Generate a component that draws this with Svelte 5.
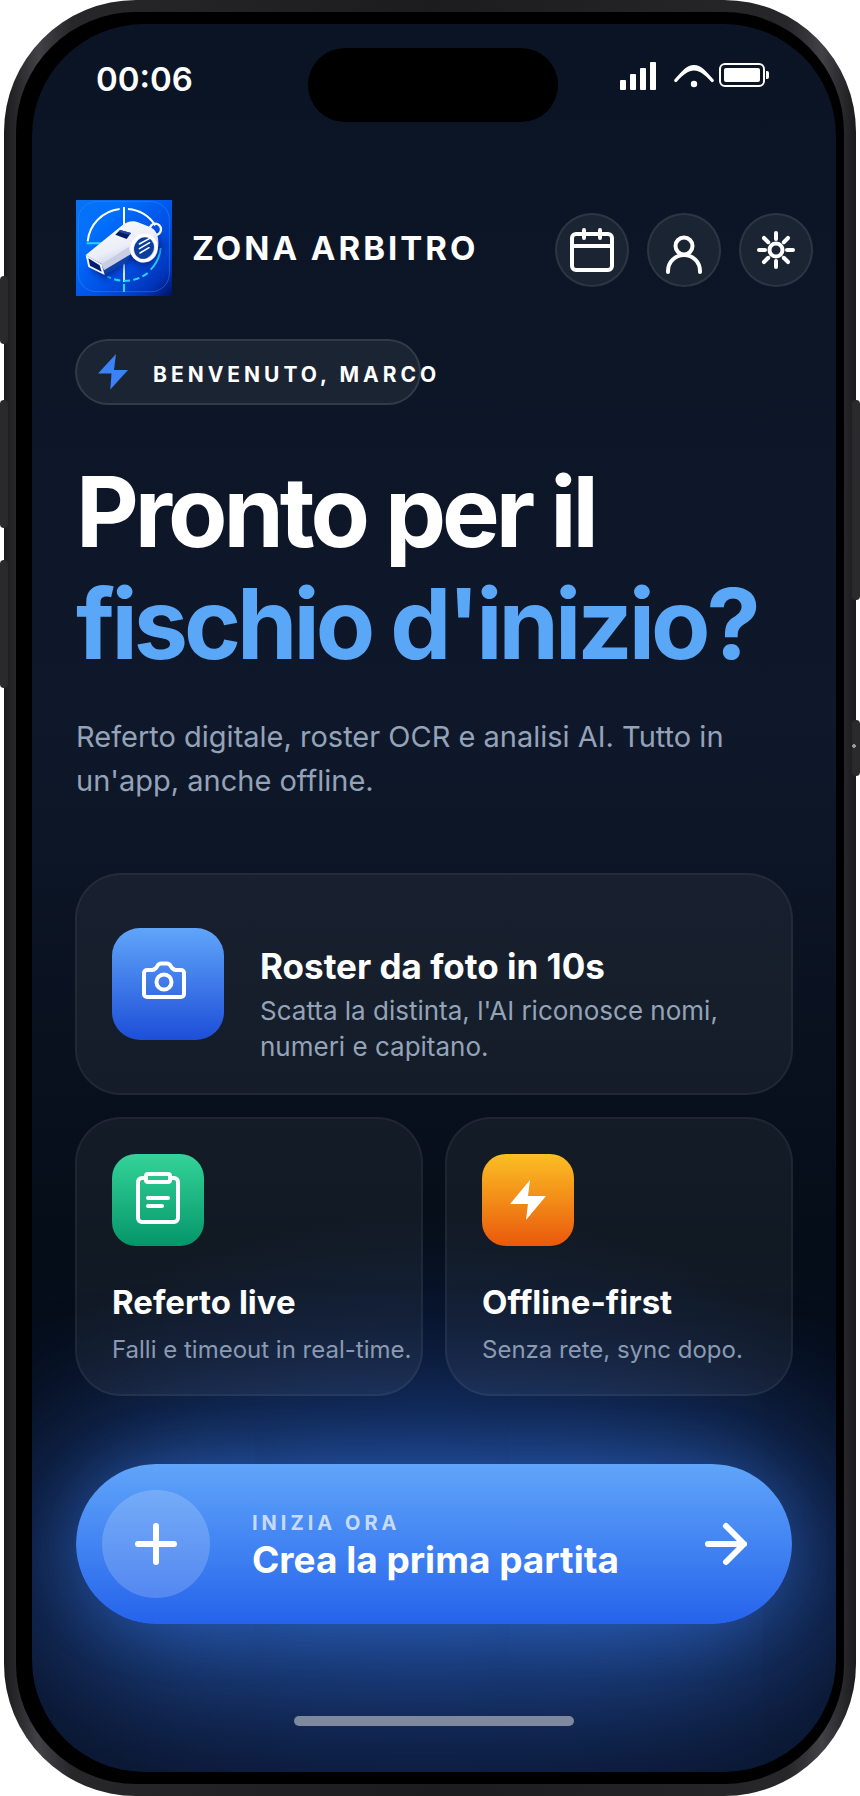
<script lang="ts">
  let userName = 'Marco';
  let time = '00:06';

  const bars = [
    { x: 0, h: 10 },
    { x: 10, h: 16 },
    { x: 20, h: 22 },
    { x: 30, h: 28 },
  ];

  const rays = [0, 45, 90, 135, 180, 225, 270, 315];
</script>

<div class="device">
  <span class="key key-action"></span>
  <span class="key key-up"></span>
  <span class="key key-down"></span>
  <span class="key key-power"></span>
  <span class="key key-camera"></span>

  <div class="frame">
    <div class="bezel">
      <main class="screen">
        <div class="status">
          <span class="clock">{time}</span>
          <span class="island"></span>
          <svg class="indicators" width="150" height="30" viewBox="0 0 150 30" fill="#fff" aria-hidden="true">
            {#each bars as bar}
              <rect x={bar.x} y={30 - bar.h} width="6" height={bar.h} rx="1" />
            {/each}
            <path d="M54.5 19.5C62 11 67 5 74 5s12 6 19.500 14.500a1.500 1.500 0 0 1-2.500 2C84 14 79.500 10.500 74 10.500S64 14 57 21.500a1.500 1.500 0 0 1-2.500-2Z" />
            <circle cx="74" cy="24" r="3.200" />
            <rect x="100" y="4" width="44" height="22" rx="5" fill="none" stroke="#fff" stroke-width="2" />
            <rect x="104" y="8" width="36" height="14" rx="2" />
            <path d="M146 11h1a2 2 0 0 1 2 2v4a2 2 0 0 1-2 2h-1Z" />
          </svg>
        </div>

        <header class="header">
          <svg class="logo" width="96" height="96" viewBox="0 0 288 288" role="img" aria-label="Zona Arbitro">
            <defs>
              <linearGradient id="logo-bg" x1="0" y1="0" x2="1" y2="1">
                <stop offset="0" stop-color="#0872f2" />
                <stop offset="0.250" stop-color="#0070ff" />
                <stop offset="0.600" stop-color="#0050e4" />
                <stop offset="0.850" stop-color="#0034b8" />
                <stop offset="1" stop-color="#02105e" />
              </linearGradient>
              <linearGradient id="logo-body" x1="0" y1="0" x2="0.600" y2="1">
                <stop offset="0" stop-color="#ffffff" />
                <stop offset="0.600" stop-color="#eceef8" />
                <stop offset="1" stop-color="#b4bbdc" />
              </linearGradient>
              <filter id="logo-shadow" x="-20%" y="-20%" width="150%" height="150%">
                <feGaussianBlur stdDeviation="9" />
              </filter>
            </defs>
            <rect width="288" height="288" fill="url(#logo-bg)" />
            <rect x="7" y="5" width="273" height="270" rx="54" fill="none" stroke="#3d8cff" stroke-opacity="0.450" stroke-width="3" />
            <g fill="none" stroke="#fff" stroke-width="6">
              <path d="M35 124A109 109 0 0 1 131 27" />
              <path d="M156 27A109 109 0 0 1 238 76" />
              <path d="M144 21v60" />
              <path d="M144 170v76" stroke="#dbe6ff" />
            </g>
            <g fill="none" stroke="#22d8ff" stroke-width="6">
              <path d="M32 130h52" />
              <path d="M254 144A110 110 0 0 1 224 209" />
              <path d="M215 219A110 110 0 0 1 94 229" stroke-dasharray="19 10" />
              <path d="M144 252v24" />
            </g>
            <path d="M40 205L90 240L160 185L215 200L262 140L230 90Z" fill="#001a80" opacity="0.700" filter="url(#logo-shadow)" />
            <ellipse cx="238" cy="88" rx="17" ry="17" fill="none" stroke="#f2f4fc" stroke-width="7" />
            <path d="M77 192L85 224L152 188L166 156Z" fill="#0c3fa8" />
            <path d="M29 165L136 78C150 66 168 61 184 66L224 82C244 92 250 116 246 144A43 45 0 0 1 164 162L160 158L84 208L77 192Z" fill="url(#logo-body)" />
            <path d="M77 193L158 141C160 154 161 160 164 163L84 211Z" fill="#c8cde4" />
            <path d="M29 165L77 193L86 225L37 201Z" fill="#f6f7fd" />
            <path d="M37 175L71 196L77 215L42 197Z" fill="#03206f" />
            <path d="M132 90L165 99L152 117L118 104Z" fill="#061c5c" />
            <path d="M132 90L165 99L161 105L129 96Z" fill="#1a48a4" />
            <ellipse cx="204" cy="144" rx="36" ry="39" fill="none" stroke="#fff" stroke-width="9" transform="rotate(25 204 144)" />
            <ellipse cx="204" cy="144" rx="29" ry="33" fill="#0b3d9c" transform="rotate(25 204 144)" />
            <path d="M190 132L221 115M190 146L221 128M192 159L219 143" stroke="#fff" stroke-width="4.500" stroke-linecap="round" />
          </svg>
          <span class="brand">ZONA ARBITRO</span>
          <nav class="actions">
            <button class="round-btn" aria-label="Calendario">
              <svg width="52" height="52" viewBox="0 0 52 52" class="line">
                <rect x="6" y="10" width="40" height="36" rx="4" />
                <path d="M6 22h40M18 6v8M34 6v8" />
              </svg>
            </button>
            <button class="round-btn" aria-label="Profilo">
              <svg width="52" height="52" viewBox="0 0 52 52" class="line">
                <circle cx="26" cy="22" r="8.500" />
                <path d="M10 48v-1a16 16 0 0 1 32 0v1" />
              </svg>
            </button>
            <button class="round-btn" aria-label="Impostazioni">
              <svg width="52" height="52" viewBox="0 0 52 52" class="line">
                <circle cx="26" cy="26" r="6.500" />
                {#each rays as angle}
                  <path d="M26 9v6" transform="rotate({angle} 26 26)" />
                {/each}
              </svg>
            </button>
          </nav>
        </header>

        <div class="badge">
          <svg width="32" height="36" viewBox="0 0 32 36" fill="#3b82f6" aria-hidden="true">
            <path d="M19 0L1 19.500H14.500L13.300 35.500L31 16H17Z" />
          </svg>
          <span>BENVENUTO, {userName.toUpperCase()}</span>
        </div>

        <h1>Pronto per il<br /><em>fischio d'inizio?</em></h1>
        <p class="lead">Referto digitale, roster OCR e analisi AI. Tutto in un'app, anche offline.</p>

        <section class="features">
          <article class="card card-wide">
            <span class="icon icon-blue">
              <svg width="104" height="104" viewBox="0 0 104 104" class="line" aria-hidden="true">
                <path d="M31 38h5c2 0 3-1 4-2l2-3c1-1 2-1.500 3-1.500h6c1 0 2 .5 3 1.500l2 3c1 1 2 2 4 2h5a3 3 0 0 1 3 3v21a3 3 0 0 1-3 3H31a3 3 0 0 1-3-3V41a3 3 0 0 1 3-3Z" />
                <circle cx="48" cy="50" r="7.500" />
              </svg>
            </span>
            <div class="card-text">
              <h2>Roster da foto in 10s</h2>
              <p>Scatta la distinta, l'AI riconosce nomi, numeri e capitano.</p>
            </div>
          </article>

          <article class="card">
            <span class="icon icon-green">
              <svg width="92" height="92" viewBox="0 0 92 92" class="line" aria-hidden="true">
                <path d="M34 24h-4a4 4 0 0 0-4 4v36a4 4 0 0 0 4 4h32a4 4 0 0 0 4-4V28a4 4 0 0 0-4-4h-4" />
                <rect x="34" y="20" width="24" height="8" rx="2" />
                <path d="M36 44h20M36 52h14" />
              </svg>
            </span>
            <h3>Referto live</h3>
            <p>Falli e timeout in real-time.</p>
          </article>

          <article class="card">
            <span class="icon icon-orange">
              <svg width="92" height="92" viewBox="0 0 92 92" fill="#fff" aria-hidden="true">
                <path d="M48 26L28 50H46L44 66L64 42H46Z" />
              </svg>
            </span>
            <h3>Offline-first</h3>
            <p>Senza rete, sync dopo.</p>
          </article>
        </section>

        <button class="cta">
          <span class="plus">
            <svg width="44" height="44" viewBox="0 0 44 44" class="line cta-line" aria-hidden="true">
              <path d="M22 4v36M4 22h36" />
            </svg>
          </span>
          <span class="cta-text">
            <small>INIZIA ORA</small>
            <strong>Crea la prima partita</strong>
          </span>
          <svg width="44" height="44" viewBox="0 0 44 44" class="line cta-line" aria-hidden="true">
            <path d="M4 22h36M22 4l18 18-18 18" />
          </svg>
        </button>

        <div class="home"></div>
      </main>
    </div>
  </div>
</div>

<style>
  :global(body) {
    margin: 0;
    background: #fff;
  }

  .device {
    position: relative;
    padding: 0 4px;
    font-family: Inter, 'Liberation Sans', sans-serif;
    color: #fff;
  }

  .frame {
    padding: 12px;
    border-radius: 132px;
    background: linear-gradient(90deg, #1a1a1c 0, #414146 4%, #27272a 8%, #1c1c1e 50%, #27272a 92%, #414146 96%, #1a1a1c 100%);
  }

  .bezel {
    padding: 12px 8px 12px 16px;
    border-radius: 120px;
    background: #000;
  }

  .screen {
    display: flex;
    flex-direction: column;
    box-sizing: border-box;
    padding: 24px 44px 46px;
    border-radius: 112px;
    overflow: hidden;
    background:
      radial-gradient(ellipse 60% 18% at 50% 86%, rgba(37, 99, 235, 0.25), rgba(37, 99, 235, 0)),
      linear-gradient(180deg, #0a1424 0%, #0f182a 40%, #050d18 70%, #081024 85%, #0a1630 100%);
  }

  /* hardware keys sit over the frame edge */
  .key {
    position: absolute;
    z-index: 1;
    width: 8px;
    border-radius: 4px;
    background: #2a2a2c;
  }

  .key-action {
    left: 0;
    top: 276px;
    height: 68px;
  }

  .key-up {
    left: 0;
    top: 400px;
    height: 128px;
  }

  .key-down {
    left: 0;
    top: 560px;
    height: 128px;
  }

  .key-power {
    right: 0;
    top: 400px;
    height: 200px;
  }

  .key-camera {
    right: 0;
    top: 720px;
    height: 56px;
    background: radial-gradient(circle at 2px 26px, #98989c 2px, #2a2a2c 2px);
  }

  .status {
    display: grid;
    grid-template-columns: 1fr 250px 1fr;
    align-items: start;
    margin: 0 22px 0 20px;
  }

  .clock {
    padding-top: 11px;
    font-size: 33px;
    font-weight: 600;
    line-height: 40px;
  }

  .island {
    height: 74px;
    border-radius: 37px;
    background: #000;
  }

  .indicators {
    justify-self: end;
    margin-top: 12px;
  }

  .header {
    display: flex;
    align-items: center;
    margin: 78px -21px 0 0;
  }

  .logo {
    flex: none;
  }

  .brand {
    margin-left: 20px;
    font-size: 33px;
    font-weight: 700;
    line-height: 44px;
    letter-spacing: 3px;
    white-space: nowrap;
  }

  .actions {
    display: flex;
    gap: 18px;
    margin-left: auto;
    padding-top: 4px;
  }

  button {
    margin: 0;
    padding: 0;
    border: none;
    font-family: inherit;
    color: inherit;
    cursor: pointer;
  }

  .round-btn {
    display: flex;
    align-items: center;
    justify-content: center;
    width: 74px;
    height: 74px;
    border: 2px solid rgba(255, 255, 255, 0.08);
    border-radius: 50%;
    background: #1b2432;
  }

  .line {
    fill: none;
    stroke: #fff;
    stroke-width: 4;
    stroke-linecap: round;
    stroke-linejoin: round;
  }

  .line.cta-line {
    stroke-width: 6;
  }

  .badge {
    display: flex;
    align-items: center;
    gap: 24px;
    box-sizing: border-box;
    width: 346px;
    height: 66px;
    margin: 43px 0 0 -1px;
    padding: 0 20px;
    border: 2px solid rgba(255, 255, 255, 0.1);
    border-radius: 33px;
    background: #1b2432;
  }

  .badge svg {
    flex: none;
  }

  .badge span {
    padding-top: 4px;
    font-size: 21px;
    font-weight: 700;
    letter-spacing: 4px;
    white-space: nowrap;
  }

  h1,
  h2,
  h3,
  p {
    margin: 0;
  }

  h1 {
    margin-top: 51px;
    font-size: 97px;
    font-weight: 700;
    line-height: 112px;
    letter-spacing: -4px;
    white-space: nowrap;
  }

  h1 em {
    font-style: normal;
    color: #5ba7f7;
  }

  .lead {
    margin-top: 35px;
    font-size: 29px;
    line-height: 44px;
    color: #94a3b8;
  }

  .features {
    display: grid;
    grid-template-columns: 1fr 1fr;
    gap: 22px;
    margin: 70px -1px 0;
  }

  .card {
    position: relative;
    z-index: 1;
    min-width: 0;
    box-sizing: border-box;
    padding: 35px 35px 28px;
    border: 2px solid rgba(255, 255, 255, 0.05);
    border-radius: 46px;
    background: rgba(255, 255, 255, 0.05);
  }

  .card-wide {
    grid-column: 1 / -1;
    display: flex;
    align-items: center;
    gap: 36px;
    min-height: 222px;
    padding: 0 35px;
  }

  .card-text {
    padding-top: 40px;
  }

  h2 {
    font-size: 35px;
    font-weight: 700;
    line-height: 44px;
  }

  .card-text p {
    margin-top: 5px;
    font-size: 26px;
    line-height: 36px;
    color: #94a3b8;
  }

  h3 {
    margin-top: 35px;
    font-size: 33px;
    font-weight: 700;
    line-height: 42px;
  }

  h3 + p {
    margin-top: 11px;
    font-size: 24px;
    line-height: 32px;
    color: #8a9ab1;
    white-space: nowrap;
  }

  .icon {
    display: flex;
    flex: none;
    align-items: center;
    justify-content: center;
    width: 92px;
    height: 92px;
    border-radius: 24px;
  }

  .icon-blue {
    width: 112px;
    height: 112px;
    border-radius: 28px;
    background: linear-gradient(180deg, #60a5fa, #1d4ed8);
  }

  .icon-green {
    background: linear-gradient(180deg, #34d399, #059669);
  }

  .icon-orange {
    background: linear-gradient(180deg, #fbbf24, #ea580c);
  }

  .cta {
    display: flex;
    align-items: center;
    height: 160px;
    margin-top: 68px;
    padding: 0 44px 0 26px;
    border-radius: 80px;
    background: linear-gradient(180deg, #60a5fa, #2563eb);
    box-shadow:
      0 0 60px rgba(59, 130, 246, 0.25),
      0 18px 160px 12px rgba(59, 130, 246, 0.7);
  }

  .plus {
    display: flex;
    flex: none;
    align-items: center;
    justify-content: center;
    width: 108px;
    height: 108px;
    border-radius: 50%;
    background: rgba(255, 255, 255, 0.18);
  }

  .cta-text {
    display: flex;
    flex: 1;
    flex-direction: column;
    gap: 2px;
    padding: 4px 0 0 42px;
    text-align: left;
  }

  .cta-text small {
    font-size: 20px;
    font-weight: 700;
    line-height: 26px;
    letter-spacing: 4px;
    color: rgba(255, 255, 255, 0.7);
  }

  .cta-text strong {
    font-size: 37px;
    font-weight: 700;
    line-height: 44px;
  }

  .home {
    position: relative;
    align-self: center;
    width: 280px;
    height: 10px;
    margin-top: 92px;
    border-radius: 5px;
    background: #7e899d;
  }
</style>
